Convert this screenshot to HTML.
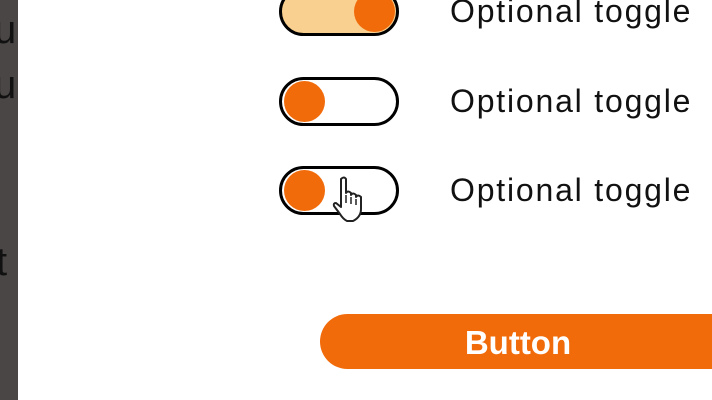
<!DOCTYPE html>
<html><head><style>
body{margin:0;width:712px;height:400px;overflow:hidden;background:#fff;position:relative;font-family:"Liberation Sans",sans-serif}
.strip{position:absolute;left:0;top:0;width:18px;height:400px;background:#4b4646;overflow:hidden}
.strip span{position:absolute;left:-6px;font-size:40px;color:#111;font-weight:300}
.tg{position:absolute;left:279px;width:114px;height:43px;border:3px solid #000;border-radius:26px;box-sizing:content-box;background:#fff}
.kn{position:absolute;top:1px;width:41px;height:41px;border-radius:50%;background:#f26b0a}
.lb{position:absolute;left:450px;font-size:32px;letter-spacing:1.8px;color:#111;line-height:36px}
.btn{position:absolute;left:320px;top:314px;width:420px;height:55px;border-radius:28px;background:#f26b0a;color:#fff;font-weight:bold;font-size:33px;line-height:58px}
.btn span{position:absolute;left:0;width:396px;text-align:center}
</style></head><body>
<div class="strip"><span style="top:8px">ur</span><span style="top:63px">ur</span><span style="top:240px;left:-4px">t</span></div>
<div class="tg" style="top:-13px;background:#f9d08f"><div class="kn" style="left:72px"></div></div>
<div class="lb" style="top:-7px">Optional toggle</div>
<div class="tg" style="top:77px"><div class="kn" style="left:2px"></div></div>
<div class="lb" style="top:83px">Optional toggle</div>
<div class="tg" style="top:166px"><div class="kn" style="left:2px"></div></div>
<div class="lb" style="top:172px">Optional toggle</div>
<svg style="position:absolute;left:330px;top:175px" width="40" height="50" viewBox="0 0 40 50">
<path d="M11 4 q3-3 5 0 v14 q2-3 5 0 v2 q2-3 5 0 v2 q2-3 5 0 v12 q0 8-8 12 h-6 q-4-2-7-7 l-6-8 q-1-3 2-3 l5 4 v-28z" fill="#fff" stroke="#222" stroke-width="2" stroke-linejoin="round"/>
<path d="M16 20v8M21 22v7M26 24v6" stroke="#222" stroke-width="1.5"/>
</svg>
<div class="btn"><span>Button</span></div>
</body></html>
